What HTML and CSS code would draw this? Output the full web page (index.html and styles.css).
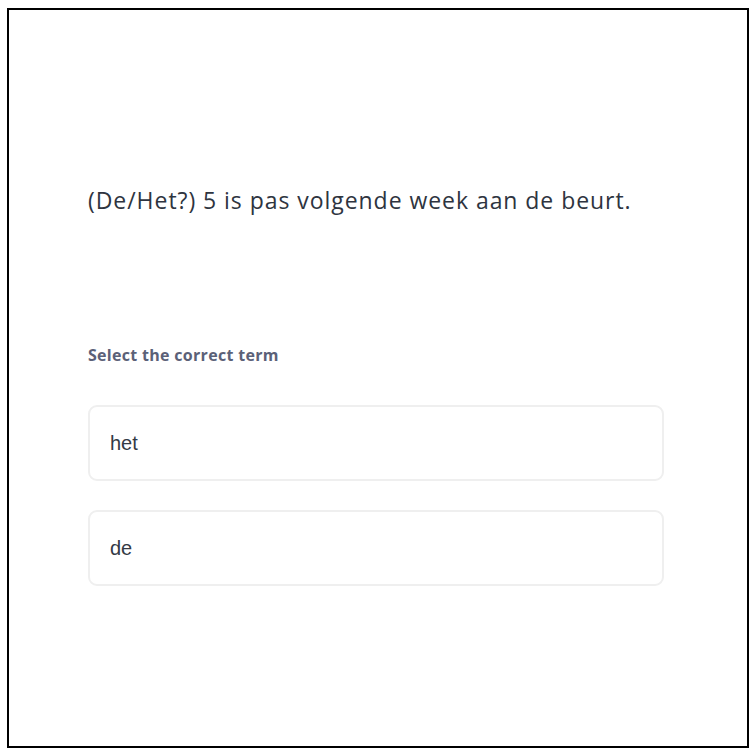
FILE: index.html
```html
<!DOCTYPE html>
<html>
<head>
<meta charset="utf-8">
<link rel="stylesheet" href="styles.css">
</head>
<body>
<div class="frame">
  <div class="content">
    <p class="question">(De/Het?) 5 is pas volgende week aan de beurt.</p>
    <p class="label">Select the correct term</p>
    <div class="options">
      <div class="option">het</div>
      <div class="option">de</div>
    </div>
  </div>
</div>
</body>
</html>
```

FILE: styles.css
```css
html, body {
  margin: 0;
  padding: 0;
  background: #fff;
}
body {
  padding: 8px 0 0 7px;
}
.frame {
  box-sizing: border-box;
  width: 742px;
  height: 740px;
  border: 2px solid #000;
  background: #fff;
}
.content {
  padding: 174px 0 0 79px;
  width: 576px;
}
.question {
  margin: 0;
  font-family: "Open Sans", sans-serif;
  font-size: 23px;
  letter-spacing: 0.95px;
  line-height: 32px;
  color: #2e3440;
}
.label {
  margin: 129px 0 0 0;
  font-family: "Open Sans", sans-serif;
  font-weight: 700;
  font-size: 16px;
  letter-spacing: 0.3px;
  line-height: 20px;
  color: #5b6178;
}
.options {
  display: flex;
  flex-direction: column;
  gap: 29px;
  margin-top: 40px;
}
.option {
  box-sizing: border-box;
  height: 76px;
  border: 2px solid #efefef;
  border-radius: 9px;
  padding: 0 20px;
  display: flex;
  align-items: center;
  font-family: "Liberation Sans", Arial, sans-serif;
  font-size: 20px;
  color: #333a45;
}
```
